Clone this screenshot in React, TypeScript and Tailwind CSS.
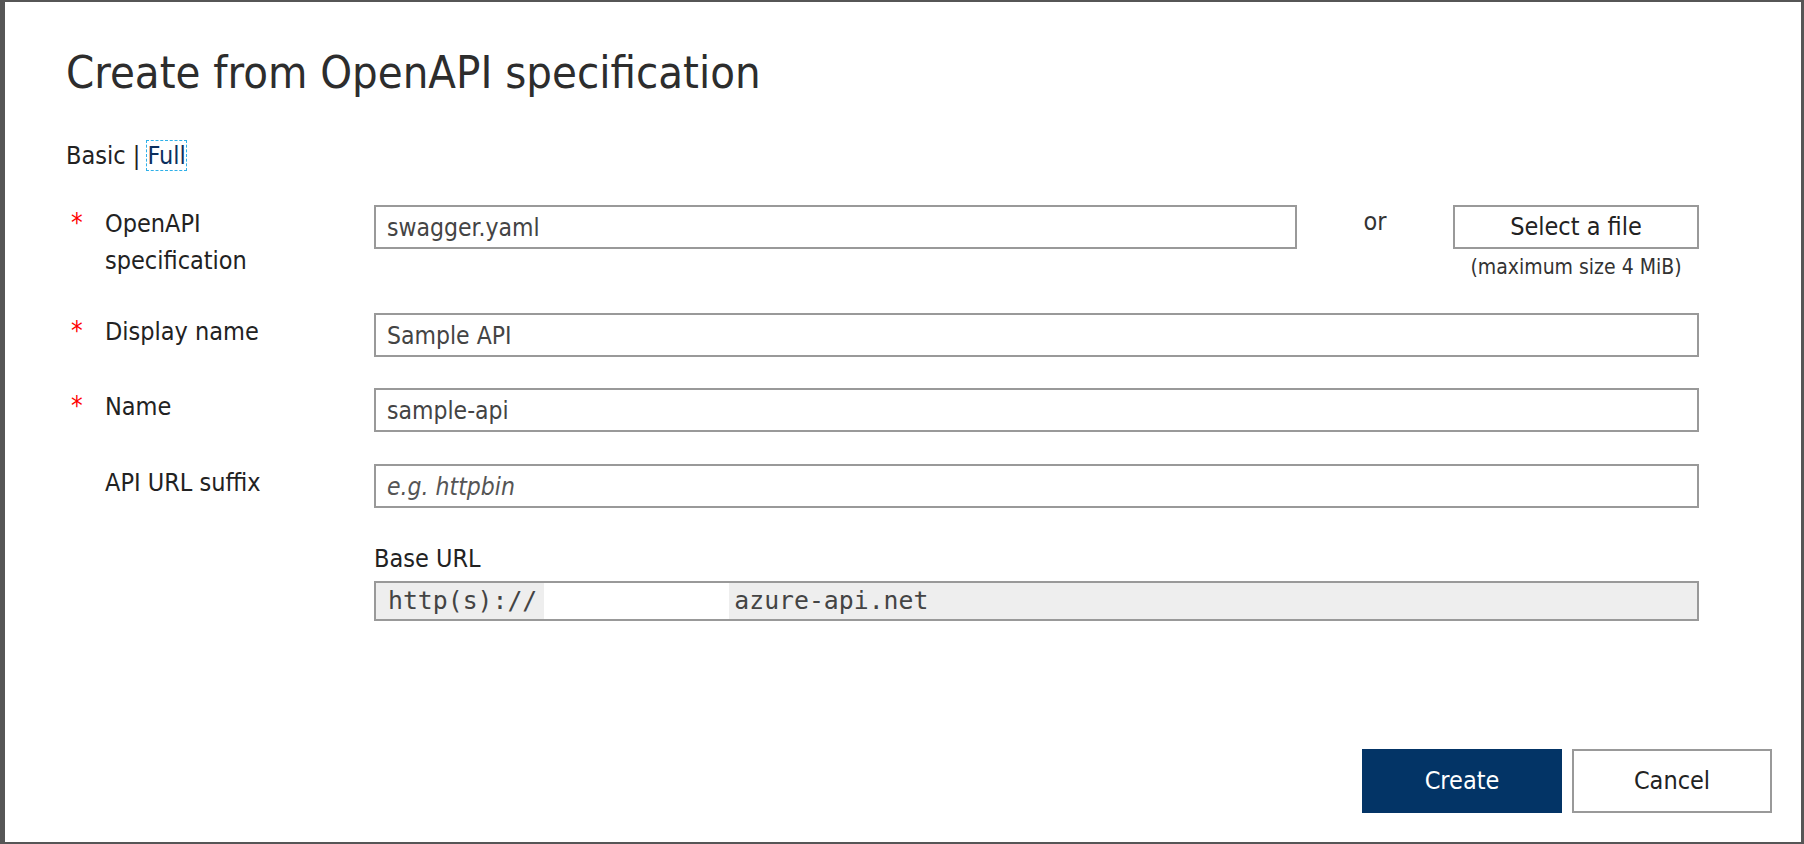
import { useState } from "react";

const font = { fontFamily: '"DejaVu Sans Condensed", "DejaVu Sans", sans-serif' };

const Required = () => <span className="w-[34px] shrink-0 text-[26px] leading-[37px] text-[#ff0000]">*</span>;

const App = () => {
  const [suffix, setSuffix] = useState("");

  return (
    <div className="h-[844px] w-[1804px] bg-[#565656] pt-[2px] pl-[5px] pr-[3px] pb-[2px]" style={font}>
      <div className="flex h-full flex-col bg-white pl-[61px] pr-[29px]">
        {/* Header */}
        <h1 className="mt-[43px] text-[45px] leading-[56px] text-[#2d2d2d]">Create from OpenAPI specification</h1>
        <div className="mt-[39px] text-[25px] leading-[32px] text-[#222]">
          Basic |{" "}
          <a href="#" className="text-[#0b2f5e] outline-1 outline-dashed outline-[#2fb0e8] outline-offset-0">Full</a>
        </div>

        {/* Form */}
        <div className="mt-[33px] flex">
          <div className="flex w-[308px] pl-[5px]">
            <Required />
            <span className="text-[25px] leading-[37px] text-[#222]">OpenAPI<br />specification</span>
          </div>
          <input
            readOnly
            value="swagger.yaml"
            className="h-[44px] w-[923px] border-2 border-[#999] px-[11px] text-[24.5px] text-[#444] outline-none"
          />
          <div className="-mt-[2px] w-[156px] text-center text-[25px] leading-[37px] text-[#333]">or</div>
          <div className="flex w-[246px] flex-col items-center">
            <button className="h-[44px] w-full border-2 border-[#999] text-[25px] text-[#222]">Select a file</button>
            <span className="mt-[5px] text-[21px] leading-[26px] text-[#333]">(maximum size 4 MiB)</span>
          </div>
        </div>

        <div className="mt-[33px] flex">
          <div className="flex w-[308px] pl-[5px]">
            <Required />
            <span className="text-[25px] leading-[37px] text-[#222]">Display name</span>
          </div>
          <input
            readOnly
            value="Sample API"
            className="h-[44px] w-[1325px] border-2 border-[#999] px-[11px] text-[24.5px] text-[#444] outline-none"
          />
        </div>

        <div className="mt-[31px] flex">
          <div className="flex w-[308px] pl-[5px]">
            <Required />
            <span className="text-[25px] leading-[37px] text-[#222]">Name</span>
          </div>
          <input
            readOnly
            value="sample-api"
            className="h-[44px] w-[1325px] border-2 border-[#999] px-[11px] text-[24.5px] text-[#444] outline-none"
          />
        </div>

        <div className="mt-[32px] flex">
          <div className="flex w-[308px] pl-[39px]">
            <span className="text-[25px] leading-[37px] text-[#222]">API URL suffix</span>
          </div>
          <input
            value={suffix}
            onChange={(e) => setSuffix(e.target.value)}
            placeholder="e.g. httpbin"
            className="h-[44px] w-[1325px] border-2 border-[#999] px-[11px] text-[24.5px] text-[#444] outline-none placeholder:italic placeholder:text-[#555]"
          />
        </div>

        <div className="mt-[35px] ml-[308px] text-[25px] leading-[32px] text-[#222]">Base URL</div>
        <div
          className="mt-[6px] ml-[308px] flex h-[40px] w-[1325px] items-center border-2 border-[#999] bg-[#eeeeee] pl-[12px] text-[24.8px] text-[#444]"
          style={{ fontFamily: '"DejaVu Sans Mono", monospace' }}
        >
          <span>http(s)://</span>
          <span className="ml-[7px] mr-[5px] h-[36px] w-[185px] bg-white" />
          <span>azure-api.net</span>
        </div>

        {/* Footer */}
        <div className="mt-auto mb-[29px] flex justify-end gap-[10px]">
          <button className="h-[64px] w-[200px] bg-[#033466] text-[25px] text-white">Create</button>
          <button className="h-[64px] w-[200px] border-2 border-[#999] bg-white text-[25px] text-[#222]">Cancel</button>
        </div>
      </div>
    </div>
  );
};

export default App;
